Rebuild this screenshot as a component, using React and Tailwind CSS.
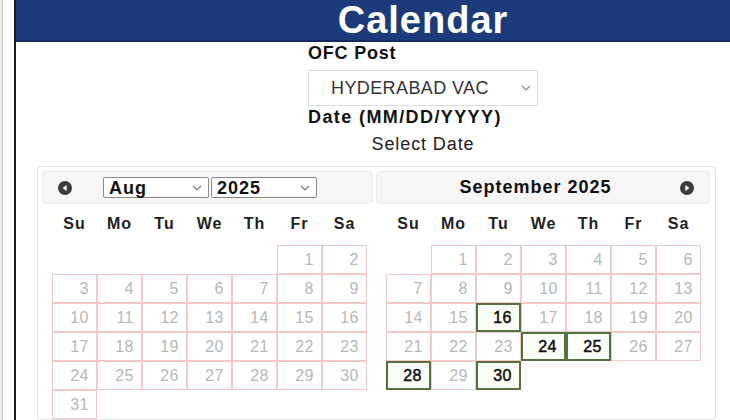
import React from "react";

const aug = [
  [null, null, null, null, null, 1, 2],
  [3, 4, 5, 6, 7, 8, 9],
  [10, 11, 12, 13, 14, 15, 16],
  [17, 18, 19, 20, 21, 22, 23],
  [24, 25, 26, 27, 28, 29, 30],
  [31],
];

const sep = [
  [null, 1, 2, 3, 4, 5, 6],
  [7, 8, 9, 10, 11, 12, 13],
  [14, 15, 16, 17, 18, 19, 20],
  [21, 22, 23, 24, 25, 26, 27],
  [28, 29, 30],
];

const DAYS = ["Su", "Mo", "Tu", "We", "Th", "Fr", "Sa"];

const Chevron = ({ color = "#8a8a8a" }) => (
  <svg width="10" height="6" viewBox="0 0 10 6">
    <polyline points="1,1 5,5 9,1" fill="none" stroke={color} strokeWidth="1.2" />
  </svg>
);

const NavIcon = ({ dir }) => (
  <svg width="14" height="14" viewBox="0 0 14 14">
    <circle cx="7" cy="7" r="7" fill="#3d3d3d" />
    {dir === "prev" ? (
      <polygon points="8.6,4 8.6,10 4.6,7" fill="#fff" />
    ) : (
      <polygon points="5.4,4 5.4,10 9.4,7" fill="#fff" />
    )}
  </svg>
);

const Cell = ({ day, available }) => {
  if (day == null) return <div className="h-[29px]" />;
  return (
    <div
      className={`h-[29px] flex items-center justify-end pr-[7px] text-[16px] tracking-[0.5px] ${
        available
          ? "border-2 border-[#56703f] bg-[#fbfef7] text-[#111] [-webkit-text-stroke:0.5px_#111]"
          : "border border-[#f2c8c8] text-[#b8b8b8]"
      }`}
    >
      {day}
    </div>
  );
};

const MonthGrid = ({ weeks, available = [] }) => (
  <div className="pl-[10px]">
    <div className="grid grid-cols-[repeat(7,45px)] h-[40px] items-center">
      {DAYS.map((d) => (
        <div key={d} className="text-center text-[16px] font-bold tracking-[1px] text-[#222]">
          {d}
        </div>
      ))}
    </div>
    <div className="grid grid-cols-[repeat(7,45px)] mt-[1px]">
      {weeks.flatMap((w, i) =>
        w.map((d, j) => <Cell key={`${i}-${j}`} day={d} available={available.includes(d)} />)
      )}
    </div>
  </div>
);

const SmallSelect = ({ value }) => (
  <div className="w-[106px] h-[21px] border border-[#8a8a8a] rounded-[2px] bg-white flex items-center justify-between pl-[5px] pr-[6px]">
    <span className="text-[18px] font-bold tracking-[1px] text-[#111] leading-none">{value}</span>
    <Chevron color="#777" />
  </div>
);

export default function App() {
  return (
    <div className="w-[730px] h-[420px] overflow-hidden bg-white flex font-['Liberation_Sans',Arial,sans-serif]">
      <div className="w-[14px] flex">
        <div className="w-[2px] bg-[#ececec]" />
        <div className="w-px bg-[#c4c4c4]" />
      </div>
      <div className="w-[2px] bg-[#1b1b1b]" />

      <div className="flex-1 flex flex-col">
        <div className="h-[42px] bg-[#1c3b7b] border-b-2 border-[#122b5c]">
          <div className="ml-[292px] w-[230px] text-center text-white text-[38px] font-bold tracking-[1px] leading-[40px]">
            Calendar
          </div>
        </div>

        <div className="ml-[292px] w-[230px] flex flex-col">
          <div className="mt-[1px] h-[20px] leading-[20px] text-[18px] font-bold tracking-[0.8px] text-[#111]">
            OFC Post
          </div>
          <div className="mt-[7px] h-[36px] border border-[#dedede] bg-white flex items-center justify-between pl-[22px] pr-[6px]">
            <span className="text-[18px] tracking-[0.4px] text-[#333]">HYDERABAD VAC</span>
            <Chevron />
          </div>
          <div className="mt-[1px] h-[20px] leading-[20px] text-[18px] font-bold tracking-[1.4px] text-[#111]">
            Date (MM/DD/YYYY)
          </div>
          <div className="mt-[7px] h-[20px] leading-[20px] text-center text-[18px] tracking-[0.9px] text-[#222]">
            Select Date
          </div>
        </div>

        <div className="mt-[12px] ml-[21px] w-[679px] flex-1 border border-[#e2e2e2] rounded-[4px] pt-[4px] pl-[4px] pr-[5px]">
          <div className="flex gap-[3px]">
            <div className="w-[331px]">
              <div className="h-[33px] bg-[#f6f6f6] border border-[#ececec] rounded-[4px] flex items-center pl-[15px]">
                <NavIcon dir="prev" />
                <div className="ml-[31px] flex gap-[2px]">
                  <SmallSelect value="Aug" />
                  <SmallSelect value="2025" />
                </div>
              </div>
              <MonthGrid weeks={aug} />
            </div>
            <div className="w-[334px]">
              <div className="h-[33px] bg-[#f6f6f6] border border-[#ececec] rounded-[4px] flex items-center">
                <div className="flex-1" />
                <span className="text-[18px] font-bold tracking-[1px] text-[#111]">September 2025</span>
                <div className="flex-1 flex justify-end pr-[15px]">
                  <NavIcon dir="next" />
                </div>
              </div>
              <MonthGrid weeks={sep} available={[16, 24, 25, 28, 30]} />
            </div>
          </div>
        </div>
      </div>
    </div>
  );
}
